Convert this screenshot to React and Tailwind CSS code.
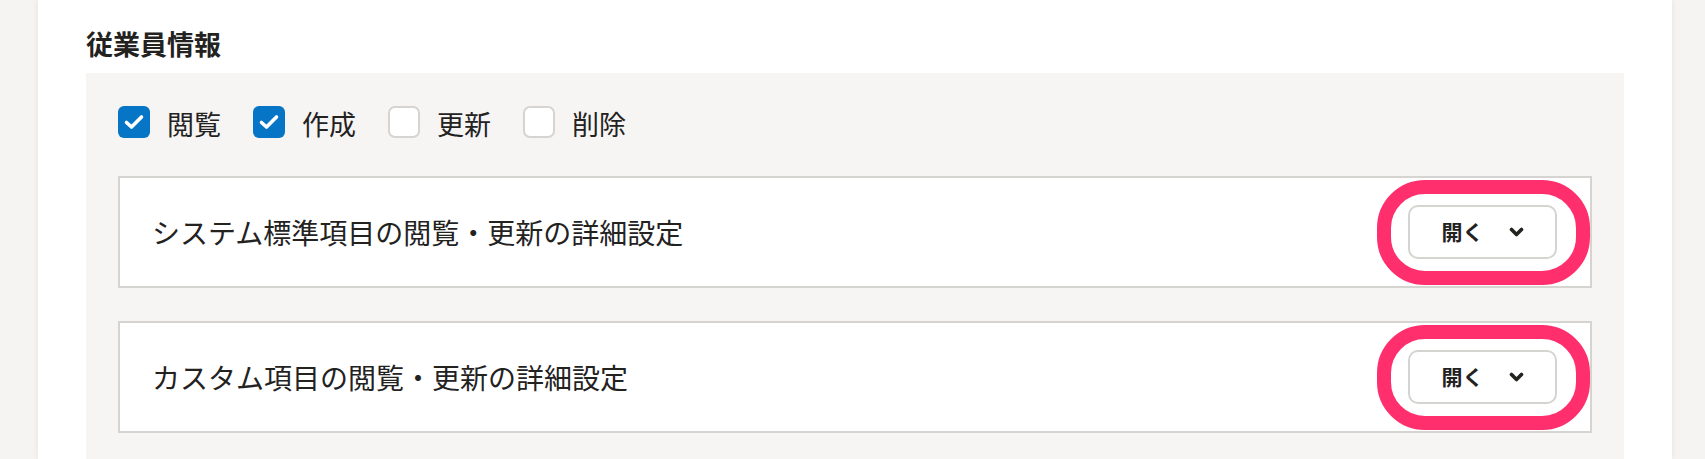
import React from 'react';

const permissions = [
  { label: '閲覧', checked: true },
  { label: '作成', checked: true },
  { label: '更新', checked: false },
  { label: '削除', checked: false },
];

const detailSections = ['システム標準項目の閲覧・更新の詳細設定', 'カスタム項目の閲覧・更新の詳細設定'];

function Checkbox({ checked }) {
  if (checked) {
    return (
      <span className="flex h-[32px] w-[32px] items-center justify-center rounded-[6px] bg-[#0675c5]">
        <svg width="22" height="18" viewBox="0 0 22 18" fill="none">
          <path d="M3.5 9.5L8.5 14L18.5 4" stroke="#fff" strokeWidth="3.6" strokeLinecap="round" strokeLinejoin="round" />
        </svg>
      </span>
    );
  }
  return <span className="h-[32px] w-[32px] rounded-[7px] border-2 border-[#d6d4d0] bg-white" />;
}

function OpenButton() {
  return (
    <div className="relative">
      <button
        type="button"
        className="flex h-[54px] w-[149px] items-center justify-center gap-[25px] rounded-[10px] border-2 border-[#d6d4d0] bg-white text-[21px] font-bold text-[#23221f]"
      >
        <span>開く</span>
        <svg width="15" height="11" viewBox="0 0 15 11" fill="none">
          <path d="M2.5 2.5L7.5 7.5L12.5 2.5" stroke="#23221f" strokeWidth="3.6" strokeLinecap="round" strokeLinejoin="round" />
        </svg>
      </button>
      <span className="pointer-events-none absolute -bottom-[26px] -left-[31px] -right-[33px] -top-[25px] rounded-[48px] border-[14px] border-[#ff2f6d]" />
    </div>
  );
}

export default function App() {
  return (
    <div className="h-[459px] w-[1705px] overflow-hidden bg-[#f5f4f2] font-['Noto_Sans_CJK_JP',sans-serif] text-[#23221f]">
      <div className="ml-[38px] h-full w-[1634px] bg-white px-[48px] pt-[26px] shadow-[0_0_6px_rgba(0,0,0,0.08)]">
        <h2 className="mb-[11px] text-[27px] font-bold leading-[36px]">従業員情報</h2>
        <div className="h-[400px] bg-[#f6f5f3] px-[32px] pt-[33px]">
          <div className="flex h-[32px] items-center gap-[32px]">
            {permissions.map((p) => (
              <label key={p.label} className="flex items-center gap-[17px] text-[27px] leading-none">
                <Checkbox checked={p.checked} />
                <span className="pt-[3px]">{p.label}</span>
              </label>
            ))}
          </div>
          <div className="mt-[38px] flex flex-col gap-[33px]">
            {detailSections.map((title) => (
              <div key={title} className="flex items-center justify-between border-2 border-[#d6d4d0] bg-white py-[27px] pl-[32px] pr-[33px]">
                <span className="text-[28px] leading-none">{title}</span>
                <OpenButton />
              </div>
            ))}
          </div>
        </div>
      </div>
    </div>
  );
}
